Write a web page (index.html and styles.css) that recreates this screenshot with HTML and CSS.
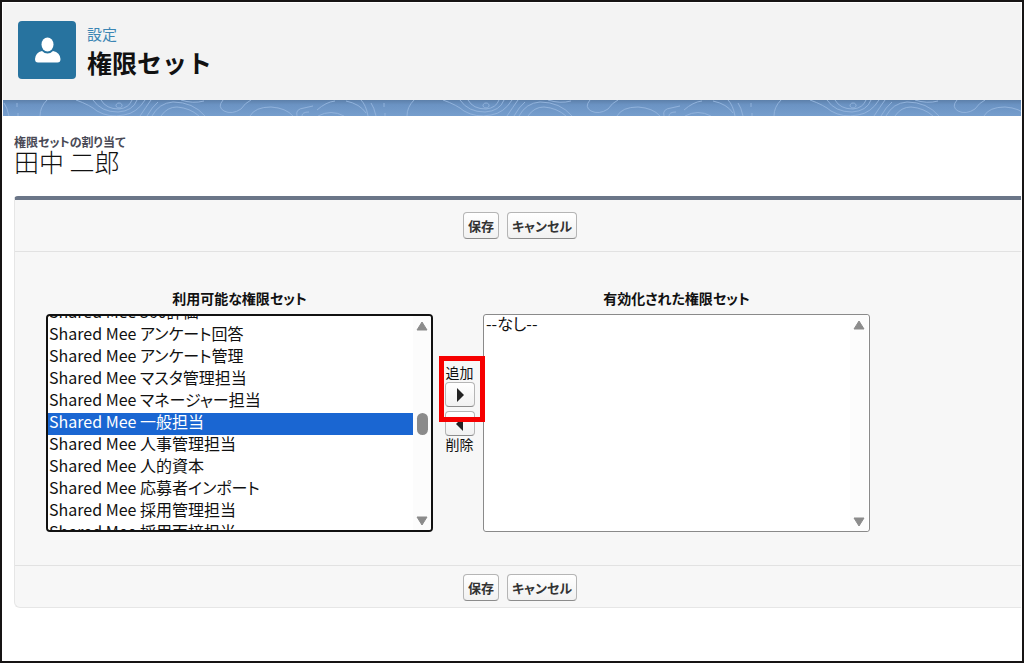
FILE: index.html
```html
<!DOCTYPE html>
<html lang="ja">
<head>
<meta charset="utf-8">
<title>権限セット</title>
<link rel="stylesheet" href="styles.css">
</head>
<body>
<div class="frame">
  <header class="page-header">
    <span class="page-icon">
      <svg viewBox="0 0 58 58" aria-hidden="true"><ellipse cx="29.500" cy="23.500" rx="6" ry="7"/><path d="M24 30Q17.500 31.500 17 38Q17 41.500 20 41.500H39.500Q42.500 41.500 42.500 38Q42 31.500 35 30Q32.500 32.500 29.500 32.500Q26.500 32.500 24 30Z"/></svg>
    </span>
    <div class="page-heading">
      <span class="eyebrow">設定</span>
      <h1 class="page-title">権限セット</h1>
    </div>
  </header>
  <svg class="wave-band" aria-hidden="true">
    <defs>
      <linearGradient id="band" x1="0" y1="0" x2="0" y2="1"><stop offset="0" stop-color="#5d80aa"/><stop offset=".3" stop-color="#6b93c3"/><stop offset="1" stop-color="#769ecd"/></linearGradient>
      <pattern id="waves" width="367" height="16" patternUnits="userSpaceOnUse">
        <path d="M1 3Q4 7 6 16M14 3V7M15 13V16M37 16Q37 7 44 0M73 0Q87 5 94 11Q106 18 121 15Q134 13 142 0M90 0Q98 12 115 12Q130 11 134 0M98 0Q103 9 116 9Q126 8 129 0M116 3a3 2.500 0 1 0 .1 0M137 16Q143 7 148 0M144 16Q149 7 155 2M149 16Q156 3 170 2Q190 2 202 16M158 16Q164 7 174 7Q187 8 196 16M178 0Q190 4 201 1M220 0Q214 7 221 11Q229 15 238 9Q242 3 248 0M247 16Q252 7 268 7Q283 8 290 16M294 16Q292 9 301 8L310 6M299 16Q299 12 306 12M314 10Q323 2 332 1M315 16Q328 9 341 16M343 1Q357 4 363 13M358 0Q363 5 365 16"/>
      </pattern>
    </defs>
    <rect width="100%" height="100%" fill="url(#band)"/>
    <rect width="100%" height="100%" fill="url(#waves)"/>
  </svg>
  <main class="content">
    <div class="record">
      <p class="record-type">権限セットの割り当て</p>
      <h2 class="record-name">田中 二郎</h2>
    </div>
    <form class="panel">
      <div class="actions">
        <button class="btn" type="button">保存</button>
        <button class="btn" type="button">キャンセル</button>
      </div>
      <div class="duel">
        <label class="list-label" for="available">利用可能な権限セット</label>
        <label class="list-label list-label-enabled" for="enabled">有効化された権限セット</label>
        <div class="listbox listbox-focused">
          <select class="list" id="available" size="10" multiple>
            <option>Shared Mee 360評価</option>
            <option>Shared Mee アンケート回答</option>
            <option>Shared Mee アンケート管理</option>
            <option>Shared Mee マスタ管理担当</option>
            <option>Shared Mee マネージャー担当</option>
            <option selected>Shared Mee 一般担当</option>
            <option>Shared Mee 人事管理担当</option>
            <option>Shared Mee 人的資本</option>
            <option>Shared Mee 応募者インポート</option>
            <option>Shared Mee 採用管理担当</option>
            <option>Shared Mee 採用面接担当</option>
          </select>
          <span class="scrollbar" aria-hidden="true">
            <svg class="arrow" viewBox="0 0 12 10"><path d="M6 1L11 9H1Z"/></svg>
            <span class="thumb"></span>
            <svg class="arrow" viewBox="0 0 12 10"><path d="M1 1H11L6 9Z"/></svg>
          </span>
        </div>
        <div class="movers">
          <div class="mover mover-marked">
            <label for="add">追加</label>
            <button class="btn-move" id="add" type="button"><svg viewBox="0 0 8 14" aria-hidden="true"><path d="M1 0L8 7L1 14Z"/></svg></button>
          </div>
          <div class="mover">
            <button class="btn-move" id="remove" type="button"><svg viewBox="0 0 8 14" aria-hidden="true"><path d="M7 0V14L0 7Z"/></svg></button>
            <label for="remove">削除</label>
          </div>
        </div>
        <div class="listbox">
          <select class="list" id="enabled" size="10" multiple>
            <option>--なし--</option>
          </select>
          <span class="scrollbar" aria-hidden="true">
            <svg class="arrow" viewBox="0 0 12 10"><path d="M6 1L11 9H1Z"/></svg>
            <svg class="arrow" viewBox="0 0 12 10"><path d="M1 1H11L6 9Z"/></svg>
          </span>
        </div>
      </div>
      <div class="actions actions-bottom">
        <button class="btn" type="button">保存</button>
        <button class="btn" type="button">キャンセル</button>
      </div>
    </form>
  </main>
</div>
<script src="script.js"></script>
</body>
</html>
```
FILE: styles.css
```css
* { box-sizing: border-box; }
body {
  margin: 0;
  background: #fff;
  color: #111;
  font-family: "Noto Sans CJK JP", sans-serif;
  font-size: 14px;
  line-height: 16px;
}
.frame {
  min-height: 100vh;
  border: 2px solid #161414;
  padding: 1px;
}
.page-header {
  display: flex;
  align-items: flex-start;
  gap: 11px;
  padding: 18px 15px 20px;
  background: #f3f3f3;
}
.page-icon {
  width: 58px;
  height: 58px;
  border-radius: 4px;
  background: #27739f;
}
.page-icon svg { display: block; fill: #fff; }
.page-heading { display: flex; flex-direction: column; }
.eyebrow {
  padding-top: 3px;
  color: #3c86b4;
  font-size: 15px;
  line-height: 20px;
}
.page-title {
  margin: 0;
  font-size: 25px;
  font-weight: 700;
  line-height: 36px;
}
.wave-band { display: block; width: 100%; height: 16px; }
.wave-band path { fill: none; stroke: #91b2db; stroke-width: 1; }
.content { padding: 19px 0 0 11px; }
.record { padding-bottom: 22px; }
.record-type {
  margin: 0;
  color: #4a4a56;
  font-size: 12px;
  font-weight: 700;
  line-height: 14px;
  font-feature-settings: "palt";
}
.record-name {
  margin: 0;
  font-size: 25px;
  font-weight: 300;
  line-height: 25px;
}
.panel {
  border: 1px solid #e6e6e6;
  border-top: 4px solid #6b7688;
  border-right: 0;
  border-radius: 4px 0 0 6px;
  background: #f7f7f7;
}
.actions {
  display: flex;
  justify-content: center;
  gap: 8px;
  padding: 12px 0 12px 4px;
  border-bottom: 1px solid #e2e2e2;
}
.actions-bottom {
  padding: 8px 0 6px 4px;
  border-top: 1px solid #e2e2e2;
  border-bottom: 0;
}
.btn, .btn-move {
  border: 1px solid #b5b5b5;
  border-bottom-color: #8c8c8c;
  border-radius: 4px;
  background: linear-gradient(#fff, #f1f1f1);
  color: #333;
}
.btn {
  height: 27px;
  padding: 0 4px;
  font: 700 13px/16px "Noto Sans CJK JP", sans-serif;
  font-feature-settings: "palt";
}
.duel {
  display: grid;
  grid-template-columns: minmax(0, 387px) 50px minmax(0, 387px);
  row-gap: 8px;
  padding: 38px 31px 33px;
}
.list-label {
  text-align: center;
  font-weight: 700;
  font-feature-settings: "palt";
}
.list-label-enabled { grid-column: 3; }
.listbox {
  display: flex;
  height: 218px;
  padding: 0 1px;
  border: 1px solid #8a8a8a;
  border-radius: 3px;
  background: #fff;
  overflow: hidden;
}
.listbox-focused {
  padding: 0;
  border: 2px solid #111;
  border-radius: 4px;
}
.list {
  flex: 1;
  min-width: 0;
  height: 100%;
  padding: 0;
  border: 0;
  outline: 0;
  background: #fff;
  color: #111;
  font: 350 16px/20px "Noto Sans CJK JP", sans-serif;
  font-feature-settings: "palt";
  overflow-y: scroll;
  scrollbar-width: none;
}
.list option {
  display: flex;
  align-items: flex-end;
  height: 22px;
  min-height: 22px;
  padding: 0 1px 2px;
}
.list option:checked { background: #1a66d2 linear-gradient(#1a66d2, #1a66d2); color: #fff; }
.scrollbar {
  display: flex;
  flex-direction: column;
  justify-content: space-between;
  align-items: center;
  width: 18px;
  padding: 5px 0 4px;
  background: #fcfcfc;
}
.arrow { width: 12px; height: 10px; fill: #8b8b8b; stroke: #8b8b8b; stroke-linejoin: round; }
.thumb { width: 11px; height: 22px; border-radius: 6px; background: #8b8b8b; }
.movers {
  display: flex;
  flex-direction: column;
  align-items: center;
  gap: 4px;
  padding: 50px 0 0 3px;
}
.mover { display: flex; flex-direction: column; align-items: center; gap: 2px; }
.mover-marked { position: relative; z-index: 1; }
.mover-marked::after {
  content: "";
  position: absolute;
  inset: -8px -10px -15px -6px;
  border: 5px solid #f60000;
  pointer-events: none;
}
.mover label { line-height: 16px; }
.mover-marked + .mover { gap: 0; }
.btn-move {
  display: grid;
  place-items: center;
  width: 30px;
  height: 25px;
  padding: 0;
}
.btn-move svg { width: 8px; height: 14px; fill: #222; }
```
FILE: script.js
```js
const available = document.getElementById("available");
available.scrollTop = 13;
```
